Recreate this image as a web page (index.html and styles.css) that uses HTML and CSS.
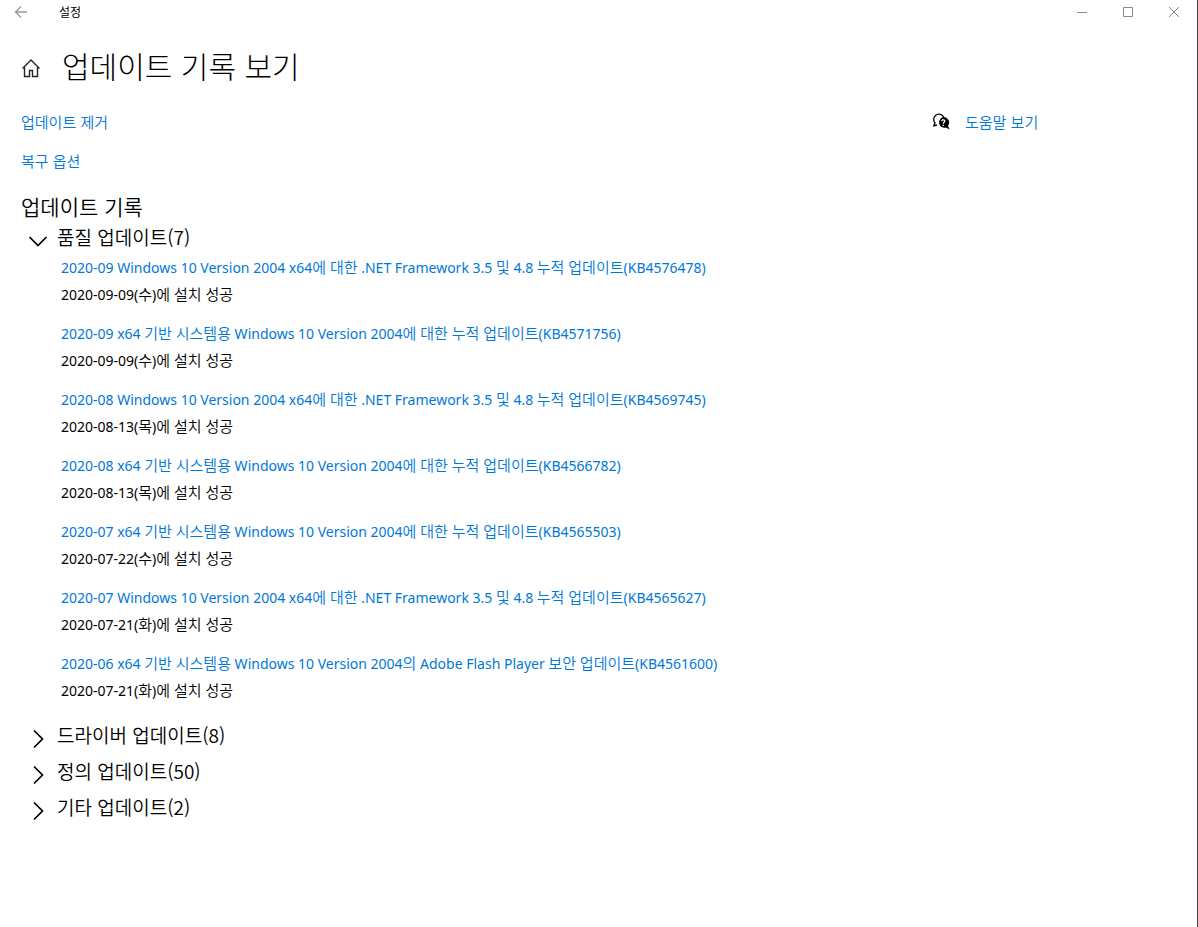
FILE: index.html
```html
<!DOCTYPE html>
<html lang="ko">
<head>
<meta charset="utf-8">
<meta name="viewport" content="width=device-width, initial-scale=1">
<title>설정</title>
<link rel="stylesheet" href="styles.css">
</head>
<body>
<div class="window">
  <header class="titlebar">
    <button class="back" type="button" aria-label="뒤로"><svg width="14" height="14" viewBox="0 0 14 14"><path d="M13 7H1.500M7 1.500 1.500 7 7 12.500"/></svg></button>
    <span class="app-name">설정</span>
    <div class="caption">
      <button type="button" aria-label="최소화"><svg width="12" height="12" viewBox="0 0 12 12"><path d="M1 6.500H11"/></svg></button>
      <button type="button" aria-label="최대화"><svg width="12" height="12" viewBox="0 0 12 12"><path d="M1.500 1.500H10.500V10.500H1.500Z"/></svg></button>
      <button type="button" aria-label="닫기"><svg width="12" height="12" viewBox="0 0 12 12"><path d="M1 1 11 11M11 1 1 11"/></svg></button>
    </div>
  </header>
  <div class="heading">
    <button class="home" type="button" aria-label="홈"><svg width="20" height="20" viewBox="0 0 20 20"><path d="M1.500 10.500 10 2 18.500 10.500M3.500 9V18.500H8.500V12.500H11.500V18.500H16.500V9"/></svg></button>
    <h1>업데이트 기록 보기</h1>
  </div>
  <div class="columns">
    <main>
      <nav class="actions">
        <a href="#uninstall">업데이트 제거</a>
        <a href="#recovery">복구 옵션</a>
      </nav>
      <h2>업데이트 기록</h2>
      <details class="group" open>
        <summary><svg class="chevron" width="20" height="20" viewBox="0 0 20 20"><path d="M1.500 6 10 14.500 18.500 6"/></svg><span>품질 업데이트(7)</span></summary>
        <ul class="updates">
          <li><a href="#KB4576478">2020-09 Windows 10 Version 2004 x64<span class="ko">에 대한</span> .NET Framework 3.5 <span class="ko">및</span> 4.8 <span class="ko">누적 업데이트</span>(KB4576478)</a><p>2020-09-09(<span class="ko">수</span>)<span class="ko">에 설치 성공</span></p></li>
          <li><a href="#KB4571756">2020-09 x64 <span class="ko">기반 시스템용</span> Windows 10 Version 2004<span class="ko">에 대한 누적 업데이트</span>(KB4571756)</a><p>2020-09-09(<span class="ko">수</span>)<span class="ko">에 설치 성공</span></p></li>
          <li><a href="#KB4569745">2020-08 Windows 10 Version 2004 x64<span class="ko">에 대한</span> .NET Framework 3.5 <span class="ko">및</span> 4.8 <span class="ko">누적 업데이트</span>(KB4569745)</a><p>2020-08-13(<span class="ko">목</span>)<span class="ko">에 설치 성공</span></p></li>
          <li><a href="#KB4566782">2020-08 x64 <span class="ko">기반 시스템용</span> Windows 10 Version 2004<span class="ko">에 대한 누적 업데이트</span>(KB4566782)</a><p>2020-08-13(<span class="ko">목</span>)<span class="ko">에 설치 성공</span></p></li>
          <li><a href="#KB4565503">2020-07 x64 <span class="ko">기반 시스템용</span> Windows 10 Version 2004<span class="ko">에 대한 누적 업데이트</span>(KB4565503)</a><p>2020-07-22(<span class="ko">수</span>)<span class="ko">에 설치 성공</span></p></li>
          <li><a href="#KB4565627">2020-07 Windows 10 Version 2004 x64<span class="ko">에 대한</span> .NET Framework 3.5 <span class="ko">및</span> 4.8 <span class="ko">누적 업데이트</span>(KB4565627)</a><p>2020-07-21(<span class="ko">화</span>)<span class="ko">에 설치 성공</span></p></li>
          <li><a href="#KB4561600">2020-06 x64 <span class="ko">기반 시스템용</span> Windows 10 Version 2004<span class="ko">의</span> Adobe Flash Player <span class="ko">보안 업데이트</span>(KB4561600)</a><p>2020-07-21(<span class="ko">화</span>)<span class="ko">에 설치 성공</span></p></li>
        </ul>
      </details>
      <details class="group">
        <summary><svg class="chevron" width="20" height="20" viewBox="0 0 20 20"><path d="M6 1.500 14.500 10 6 18.500"/></svg><span>드라이버 업데이트(8)</span></summary>
      </details>
      <details class="group">
        <summary><svg class="chevron" width="20" height="20" viewBox="0 0 20 20"><path d="M6 1.500 14.500 10 6 18.500"/></svg><span>정의 업데이트(50)</span></summary>
      </details>
      <details class="group">
        <summary><svg class="chevron" width="20" height="20" viewBox="0 0 20 20"><path d="M6 1.500 14.500 10 6 18.500"/></svg><span>기타 업데이트(2)</span></summary>
      </details>
    </main>
    <aside>
      <a class="help" href="#help">
        <svg width="18" height="18" viewBox="0 0 18 18"><path class="bubble" d="M11.800 4.300A5.300 5.300 0 1 0 3 10L1.800 12.800 5 12"/><path class="solid" d="M11.400 4.100a5.400 5.400 0 1 0 2.500 10.500L17.500 16.500 16 12.800A5.400 5.400 0 0 0 11.400 4.100Z"/><path class="mark" d="M9.800 8.200C9.800 6.200 13 6.400 12.800 8.200 12.700 9.300 11.300 9.300 11.300 10.700M11.300 11.800V13"/></svg>
        <span>도움말 보기</span>
      </a>
    </aside>
  </div>
</div>
</body>
</html>
```
FILE: styles.css
```css
* { box-sizing: border-box; }
body {
  margin: 0;
  background: #fff;
  color: #000;
  font-family: "Noto Sans CJK KR", sans-serif;
  font-size: 15px;
  font-weight: 350;
  line-height: 20px;
}
h1, h2, p, ul { margin: 0; padding: 0; font-weight: inherit; }
ul { list-style: none; }
a { color: #0078d7; text-decoration: none; }
button { border: 0; padding: 0; background: none; color: inherit; display: grid; place-items: center; }
svg { display: block; flex: none; fill: none; stroke: currentColor; }
.window { min-height: 100vh; border-right: 1px solid #3c3c3c; }
.titlebar { display: flex; align-items: center; height: 24px; padding-left: 14px; }
.back { color: #999; width: 14px; }
.back svg { stroke-width: 1.3; }
.app-name { margin-left: 31px; font-size: 12px; font-weight: 400; }
.caption { display: flex; margin-left: auto; color: #888; }
.caption button { width: 46px; height: 24px; }
.heading { display: flex; align-items: center; padding: 19px 21px 0; gap: 21px; }
.home { color: #222; padding-top: 5px; }
.home svg { stroke-width: 1.4; }
h1 { font-size: 30px; line-height: 44px; font-weight: 300; }
.columns { display: flex; justify-content: space-between; padding: 25px 0 0 21px; }
.actions { display: flex; flex-direction: column; align-items: flex-start; gap: 19px; }
h2 { margin-top: 19px; font-size: 21px; line-height: 32px; }
.group { font-size: 19px; line-height: 28px; margin-bottom: 8px; }
h2 + .group { margin-top: 1px; }
summary { display: flex; align-items: center; gap: 9px; padding-left: 7px; list-style: none; }
.chevron { margin-top: 7px; stroke-width: 1.7; }
.updates {
  display: grid;
  gap: 19px;
  padding: 7px 0 12px 40px;
  font-family: "Noto Sans", "Noto Sans CJK KR", sans-serif;
  font-size: 14px;
  font-weight: 400;
  line-height: 20px;
}
.updates p { margin-top: 7px; }
.updates a { display: block; }
.ko { font-size: 15px; font-weight: 350; line-height: 1; }
aside { flex: none; width: 265px; }
.help { display: flex; align-items: center; gap: 15px; }
.help svg { color: #000; }
.bubble { stroke-width: 1.3; }
.solid { fill: #000; stroke: none; }
.mark { stroke: #fff; stroke-width: 1.3; }
```
